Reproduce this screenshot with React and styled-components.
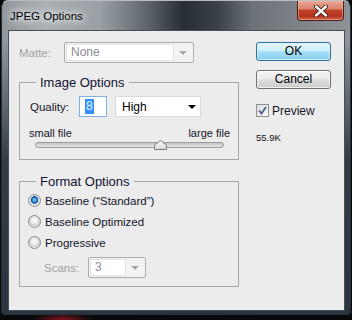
import styled, { createGlobalStyle } from 'styled-components';

const GlobalStyle = createGlobalStyle`
  html, body {
    margin: 0;
    padding: 0;
    background: #07090b;
  }
  body {
    width: 352px;
    height: 320px;
    overflow: hidden;
    font-family: "Liberation Sans", Arial, sans-serif;
  }
`;

const Screen = styled.div`
  width: 352px;
  height: 320px;
  box-sizing: border-box;
  padding-left: 1px;
  background:
    radial-gradient(ellipse 30px 8px at 62px 320px, rgba(150, 20, 30, 0.85), rgba(150, 20, 30, 0) 100%),
    #07090b;
`;

const Window = styled.div`
  width: 350px;
  height: 315px;
  box-sizing: border-box;
  border: 1px solid #2a3036;
  border-top-color: #b6bcc1;
  border-radius: 7px 7px 4px 4px;
  display: flex;
  flex-direction: column;
  padding: 0 5px 3px 6px;
  background:
    linear-gradient(180deg, rgba(30, 40, 50, 0) 0px, rgba(30, 40, 50, 0) 40px, rgba(34, 44, 54, 0.85) 160px, rgba(38, 50, 60, 0.97) 100%),
    linear-gradient(90deg, #8f969c 0%, #a9afb4 12%, #9aa1a6 28%, #5c636a 42%, #262d34 52%, #3a4148 62%, #6b7278 72%, #7c8287 85%, #8d9398 100%);
`;

const TitleBar = styled.div`
  height: 29px;
  display: flex;
  justify-content: space-between;
  align-items: flex-start;
  margin: 0 -5px 0 -6px;
`;

const Title = styled.div`
  padding: 7px 0 0 8px;
  font-size: 11.5px;
  line-height: 16px;
  color: #000;
  text-shadow: 0 0 6px #fff, 0 0 10px rgba(255, 255, 255, 0.9), 0 0 14px rgba(255, 255, 255, 0.7);
`;

const CloseButton = styled.div`
  width: 47px;
  height: 20px;
  margin-right: 6px;
  box-sizing: border-box;
  border: 1px solid #4b1d16;
  border-top: none;
  border-radius: 0 0 4px 4px;
  display: flex;
  align-items: center;
  justify-content: center;
  background: linear-gradient(180deg, #e9a592 0%, #d9826c 40%, #c0412a 50%, #b3321e 80%, #d26a4c 100%);
  box-shadow: inset 0 0 0 1px rgba(255, 200, 180, 0.45);
`;

const Client = styled.div`
  flex: 1;
  box-sizing: border-box;
  background: #ececec;
  border: 1px solid #46505a;
  display: flex;
  gap: 17px;
  padding: 11px 0 0 10px;
  color: #15152a;
  font-size: 11.5px;
`;

const LeftColumn = styled.div`
  width: 220px;
  display: flex;
  flex-direction: column;
`;

const RightColumn = styled.div`
  width: 75px;
  display: flex;
  flex-direction: column;
`;

const Row = styled.div`
  display: flex;
  align-items: center;
  height: ${p => p.$h || 21}px;
  margin-top: ${p => p.$top || 0}px;
  padding-left: ${p => p.$indent || 0}px;
`;

const Label = styled.span`
  width: ${p => p.$w}px;
  flex: none;
  color: ${p => (p.$disabled ? '#a2a2a2' : '#15152a')};
`;

const DisabledSelect = styled.div`
  width: ${p => p.$w}px;
  height: 21px;
  box-sizing: border-box;
  border: 1px solid #adadad;
  border-radius: 2px;
  background: #f3f3f3;
  padding: 1px;
  display: flex;
`;

const SelectField = styled.div`
  flex: 1;
  border: 1px solid #e3e3e3;
  background: #fff;
  color: #8c8c96;
  padding-left: 4px;
  line-height: 15px;
  font-size: 12px;
`;

const ArrowBox = styled.div`
  width: 18px;
  display: flex;
  align-items: center;
  justify-content: center;
`;

const Caret = styled.span`
  width: 0;
  height: 0;
  border-left: ${p => (p.$dark ? 4 : 4)}px solid transparent;
  border-right: ${p => (p.$dark ? 4 : 4)}px solid transparent;
  border-top: 4px solid ${p => (p.$dark ? '#000' : '#a8a8a8')};
`;

const Group = styled.fieldset`
  margin: ${p => p.$top}px 0 0;
  padding: 0;
  border: 1px solid #a6a6a6;
  min-inline-size: 0;
`;

const Legend = styled.legend`
  margin-left: 16px;
  padding: 0 4px;
  font-size: 13px;
  line-height: 15px;
  color: #121230;
`;

const GroupBody = styled.div`
  padding: ${p => p.$pad};
  display: flex;
  flex-direction: column;
`;

const QualityInput = styled.div`
  width: 28px;
  height: 21px;
  box-sizing: border-box;
  border: 1px solid #7fb2e5;
  background: #fff;
  padding: 2px 0 0 5px;
  flex: none;
`;

const Selection = styled.span`
  display: inline-block;
  background: #3390ff;
  color: #e8f2ff;
  line-height: 15px;
  font-size: 12px;
  padding: 0 1px;
`;

const Dropdown = styled.div`
  width: 86px;
  height: 21px;
  margin-left: 8px;
  box-sizing: border-box;
  border: 1px solid #dadada;
  background: #fff;
  display: flex;
  align-items: center;
  justify-content: space-between;
  padding: 0 4px 0 6px;
  font-size: 12px;
  color: #000;
`;

const SliderLabels = styled.div`
  display: flex;
  justify-content: space-between;
  margin-top: 10px;
  padding: 0 8px 0 9px;
  height: 12px;
  line-height: 12px;
  font-size: 11px;
`;

const SliderRow = styled.div`
  height: 12px;
  padding-top: 3px;
  box-sizing: border-box;
`;

const Track = styled.div`
  position: relative;
  height: 6px;
  margin: 0 14px 0 15px;
  box-sizing: border-box;
  border: 1px solid #9c9c9c;
  border-radius: 3px;
  background: linear-gradient(180deg, #c6c6c6, #e6e6e6);
`;

const Thumb = styled.svg`
  position: absolute;
  top: -3px;
  left: ${p => p.$left}px;
`;

const RadioRow = styled.label`
  display: flex;
  align-items: center;
  gap: 4px;
  height: 21px;
`;

const Radio = styled.span`
  width: 13px;
  height: 13px;
  box-sizing: border-box;
  border-radius: 50%;
  border: 1px solid #8a8d90;
  background: ${p =>
    p.$checked
      ? 'radial-gradient(circle at 50% 45%, #9fdcff 0, #2d8ad4 2px, #0c4f8a 3.5px, #d9dde1 4px, #f4f4f4 100%)'
      : 'radial-gradient(circle at 50% 40%, #ffffff 0, #e2e2e2 4px, #c8c8c8 5.5px, #f2f2f2 6px)'};
  flex: none;
`;

const Button = styled.button`
  width: 75px;
  height: 19px;
  margin-top: ${p => p.$top || 0}px;
  box-sizing: border-box;
  padding: 0;
  border-radius: 3px;
  font-family: "Liberation Sans", Arial, sans-serif;
  font-size: 12px;
  line-height: 17px;
  color: #000;
  border: 1px solid ${p => (p.$primary ? '#2f6d9d' : '#707070')};
  background: ${p =>
    p.$primary
      ? 'linear-gradient(180deg, #e4f5fd 0%, #cfeefc 45%, #a4ddf7 52%, #86cff1 100%)'
      : 'linear-gradient(180deg, #f5f5f5 0%, #ebebeb 45%, #dcdcdc 52%, #cdcdcd 100%)'};
  box-shadow: inset 0 0 0 1px ${p => (p.$primary ? 'rgba(220, 245, 255, 0.8)' : 'rgba(255, 255, 255, 0.7)')};
`;

const CheckRow = styled.label`
  display: flex;
  align-items: center;
  gap: 3px;
  height: 13px;
  margin-top: 15px;
  font-size: 12px;
`;

const CheckBox = styled.span`
  width: 13px;
  height: 13px;
  box-sizing: border-box;
  border: 1px solid #8e8f8f;
  background: linear-gradient(135deg, #dcdcdc, #fafafa);
  display: flex;
  align-items: center;
  justify-content: center;
  flex: none;
`;

const FileSize = styled.div`
  margin-top: 15px;
  font-size: 9.5px;
  line-height: 11px;
  color: #111;
`;

export default function App() {
  return (
    <>
      <GlobalStyle />
      <Screen>
        <Window>
          <TitleBar>
            <Title>JPEG Options</Title>
            <CloseButton>
              <svg width="14" height="12" viewBox="0 0 14 12">
                <path d="M2 1.5 L12 10.5 M12 1.5 L2 10.5" stroke="#3b1510" strokeWidth="4.2" strokeLinecap="round" />
                <path d="M2 1.5 L12 10.5 M12 1.5 L2 10.5" stroke="#fff" strokeWidth="2.4" strokeLinecap="round" />
              </svg>
            </CloseButton>
          </TitleBar>

          <Client>
            <LeftColumn>
              <Row>
                <Label $w={45} $disabled>Matte:</Label>
                <DisabledSelect $w={130}>
                  <SelectField>None</SelectField>
                  <ArrowBox><Caret /></ArrowBox>
                </DisabledSelect>
              </Row>

              <Group $top={12}>
                <Legend>Image Options</Legend>
                <GroupBody $pad="6px 0 8px 0">
                  <Row $indent={10}>
                    <Label $w={49}>Quality:</Label>
                    <QualityInput><Selection>8</Selection></QualityInput>
                    <Dropdown>
                      <span>High</span>
                      <Caret $dark />
                    </Dropdown>
                  </Row>
                  <SliderLabels>
                    <span>small file</span>
                    <span>large file</span>
                  </SliderLabels>
                  <SliderRow>
                    <Track>
                      <Thumb $left={118} width="13" height="10" viewBox="0 0 13 10">
                        <defs>
                          <linearGradient id="thumbFill" x1="0" y1="0" x2="0" y2="1">
                            <stop offset="0" stopColor="#fdfdfd" />
                            <stop offset="1" stopColor="#d6d6d6" />
                          </linearGradient>
                        </defs>
                        <polygon points="6.5,0.5 12.5,5 12.5,9.5 0.5,9.5 0.5,5" fill="url(#thumbFill)" stroke="#7f7f7f" />
                      </Thumb>
                    </Track>
                  </SliderRow>
                </GroupBody>
              </Group>

              <Group $top={14}>
                <Legend>Format Options</Legend>
                <GroupBody $pad="1px 0 8px 8px">
                  <RadioRow><Radio $checked />Baseline (“Standard”)</RadioRow>
                  <RadioRow><Radio />Baseline Optimized</RadioRow>
                  <RadioRow><Radio />Progressive</RadioRow>
                  <Row $top={4} $indent={16}>
                    <Label $w={44} $disabled>Scans:</Label>
                    <DisabledSelect $w={58}>
                      <SelectField>3</SelectField>
                      <ArrowBox><Caret /></ArrowBox>
                    </DisabledSelect>
                  </Row>
                </GroupBody>
              </Group>
            </LeftColumn>

            <RightColumn>
              <Button $primary>OK</Button>
              <Button $top={9}>Cancel</Button>
              <CheckRow>
                <CheckBox>
                  <svg width="9" height="9" viewBox="0 0 9 9">
                    <path d="M1 4.5 L3.5 7.5 L8 1" fill="none" stroke="#4a5f8f" strokeWidth="1.8" />
                  </svg>
                </CheckBox>
                Preview
              </CheckRow>
              <FileSize>55.9K</FileSize>
            </RightColumn>
          </Client>
        </Window>
      </Screen>
    </>
  );
}
